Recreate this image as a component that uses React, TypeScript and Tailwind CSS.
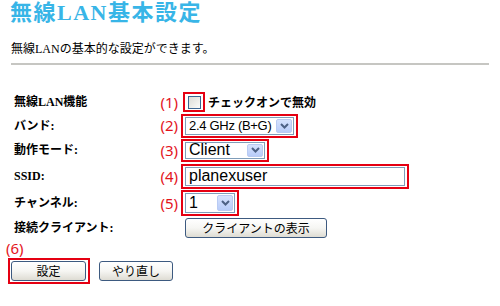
import React from "react";

const SERIF = "font-['Liberation_Serif','Noto_Sans_CJK_JP',serif]";

function Chevron() {
  return (
    <svg width="9" height="6" viewBox="0 0 9 6" className="block">
      <path d="M1 1 L4.5 4.5 L8 1" stroke="#4d6185" strokeWidth="2" fill="none" />
    </svg>
  );
}

function Select({ w, h, text, size }: { w: string; h: string; text: string; size: string }) {
  return (
    <div className={`${w} ${h} flex border border-[#7f9db9] bg-white`}>
      <div
        className={`flex-1 flex items-center pl-[3px] ${size} font-['Liberation_Sans',Arial,sans-serif] text-black leading-none whitespace-nowrap`}
      >
        {text}
      </div>
      <div className="w-[16px] m-[1px] flex items-center justify-center rounded-[2px] border border-[#b9cbf3] bg-gradient-to-b from-[#d6e2fd] to-[#b8ccf9]">
        <Chevron />
      </div>
    </div>
  );
}

function Num({ n }: { n: string }) {
  return (
    <div className="w-[28px] text-right text-[15px] text-[#e3141c] font-['Noto_Sans',sans-serif] leading-none">
      {n}
    </div>
  );
}

function Label({ children }: { children: React.ReactNode }) {
  return (
    <div className={`w-[150px] pl-[14px] text-[12px] font-bold text-black ${SERIF} leading-none whitespace-nowrap`}>
      {children}
    </div>
  );
}

function Btn({ w, children }: { w: string; children: React.ReactNode }) {
  return (
    <div
      className={`${w} h-[20px] flex items-center justify-center rounded-[3px] border border-[#3d5a80] bg-gradient-to-b from-[#ffffff] via-[#f6f6f3] to-[#dedcd3] text-[12px] text-black font-['Noto_Sans_CJK_JP',sans-serif] leading-none`}
    >
      {children}
    </div>
  );
}

export default function App() {
  return (
    <div className="w-[500px] h-[306px] bg-white overflow-hidden flex flex-col">
      <div
        className={`h-[26px] leading-[26px] pl-[10px] text-[22px] font-bold tracking-[1.5px] text-[#38b5e7] ${SERIF} whitespace-nowrap`}
      >
        無線LAN基本設定
      </div>
      <div className={`mt-[15px] h-[16px] leading-[16px] pl-[11px] text-[12px] text-black ${SERIF} whitespace-nowrap`}>
        無線LANの基本的な設定ができます。
      </div>
      <div className="mt-[6px] h-[2px] ml-[11px] w-[478px] bg-[#c6c6c2]" />

      <div className="mt-[26px] flex flex-col">
        {/* row 1 */}
        <div className="h-[22px] flex items-center">
          <Label>無線LAN機能</Label>
          <Num n="(1)" />
          <div className="ml-[5px] w-[22px] h-[20px] border-2 border-[#e50012] flex items-center justify-center pl-[1px]">
            <div className="w-[13px] h-[13px] border border-[#3c6591] bg-gradient-to-br from-[#dcdcd6] to-[#fbfbf9]" />
          </div>
          <div className="ml-[3px] text-[12px] font-bold text-black font-['Noto_Sans_CJK_JP',sans-serif] leading-none whitespace-nowrap">
            チェックオンで無効
          </div>
        </div>
        {/* row 2 */}
        <div className="h-[25px] flex items-center">
          <Label>バンド:</Label>
          <Num n="(2)" />
          <div className="ml-[3px] border-2 border-[#e50012] px-[2px] py-[1px]">
            <Select w="w-[109px]" h="h-[18px]" text="2.4 GHz (B+G)" size="text-[13px] tracking-[-0.3px]" />
          </div>
        </div>
        {/* row 3 */}
        <div className="h-[24px] flex items-center">
          <Label>動作モード:</Label>
          <Num n="(3)" />
          <div className="ml-[3px] border-2 border-[#e50012] px-[2px] py-[1px]">
            <Select w="w-[80px]" h="h-[17px]" text="Client" size="text-[16px]" />
          </div>
        </div>
        {/* row 4 */}
        <div className="h-[28px] flex items-center">
          <Label>SSID:</Label>
          <Num n="(4)" />
          <div className="ml-[3px] border-2 border-[#e50012] px-[2px] py-[1px]">
            <div className="w-[220px] h-[19px] border border-[#7f9db9] bg-white flex items-center pl-[3px] text-[16px] text-black font-['Liberation_Sans',Arial,sans-serif] leading-none">
              planexuser
            </div>
          </div>
        </div>
        {/* row 5 */}
        <div className="h-[26px] flex items-center">
          <Label>チャンネル:</Label>
          <Num n="(5)" />
          <div className="ml-[3px] border-2 border-[#e50012] px-[2px] py-[1px]">
            <Select w="w-[50px]" h="h-[20px]" text="1" size="text-[16px]" />
          </div>
        </div>
        {/* row 6 */}
        <div className="h-[23px] flex items-center">
          <Label>接続クライアント:</Label>
          <div className="w-[28px]" />
          <div className="ml-[7px]">
            <Btn w="w-[142px]">クライアントの表示</Btn>
          </div>
        </div>
        {/* (6) */}
        <div className="h-[19px] flex items-center pl-[6px]">
          <div className="text-[15px] text-[#e3141c] font-['Noto_Sans',sans-serif] leading-none">(6)</div>
        </div>
        {/* buttons */}
        <div className="h-[26px] flex items-center pl-[8px]">
          <div className="border-2 border-[#e50012] pl-[1px] pr-[2px] py-[1px]">
            <Btn w="w-[75px]">設定</Btn>
          </div>
          <div className="ml-[9px]">
            <Btn w="w-[74px]">やり直し</Btn>
          </div>
        </div>
      </div>
    </div>
  );
}
